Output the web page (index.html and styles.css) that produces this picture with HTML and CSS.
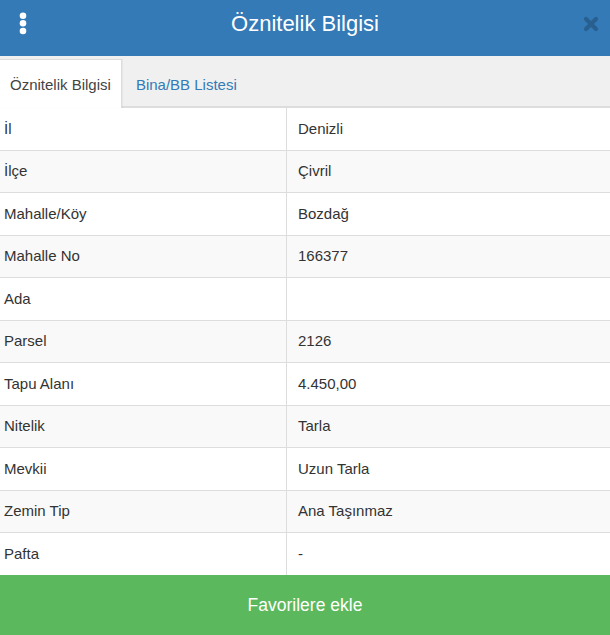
FILE: index.html
```html
<!DOCTYPE html>
<html lang="tr">
<head>
<meta charset="utf-8">
<title>Öznitelik Bilgisi</title>
<link rel="stylesheet" href="styles.css">
</head>
<body>
<div class="panel">
  <header class="header">
    <div class="header-left">
      <svg class="kebab" width="12" height="24" viewBox="0 0 12 24">
        <circle cx="6" cy="3.7" r="3.3" fill="#fff"/>
        <circle cx="6" cy="11.3" r="3.3" fill="#fff"/>
        <circle cx="6" cy="19" r="3.3" fill="#fff"/>
      </svg>
    </div>
    <h1 class="title">Öznitelik Bilgisi</h1>
    <div class="header-right">
      <svg class="close" width="16" height="16" viewBox="0 0 16 16">
        <path d="M3 3 L13 13 M13 3 L3 13" stroke="#285f8f" stroke-width="4.2" stroke-linecap="round" fill="none"/>
      </svg>
    </div>
  </header>
  <nav class="tabs">
    <div class="tab active">Öznitelik Bilgisi</div>
    <div class="tab">Bina/BB Listesi</div>
  </nav>
  <table class="attrs">
    <tbody>
      <tr><td class="k">İl</td><td class="v">Denizli</td></tr>
      <tr><td class="k">İlçe</td><td class="v">Çivril</td></tr>
      <tr><td class="k">Mahalle/Köy</td><td class="v">Bozdağ</td></tr>
      <tr><td class="k">Mahalle No</td><td class="v">166377</td></tr>
      <tr><td class="k">Ada</td><td class="v"></td></tr>
      <tr><td class="k">Parsel</td><td class="v">2126</td></tr>
      <tr><td class="k">Tapu Alanı</td><td class="v">4.450,00</td></tr>
      <tr><td class="k">Nitelik</td><td class="v">Tarla</td></tr>
      <tr><td class="k">Mevkii</td><td class="v">Uzun Tarla</td></tr>
      <tr><td class="k">Zemin Tip</td><td class="v">Ana Taşınmaz</td></tr>
      <tr><td class="k">Pafta</td><td class="v">-</td></tr>
    </tbody>
  </table>
  <div class="spacer"></div>
  <button class="fav">Favorilere ekle</button>
</div>
</body>
</html>
```

FILE: styles.css
```css
html, body {
  margin: 0;
  padding: 0;
  background: #fff;
}
body {
  font-family: "Liberation Sans", Arial, sans-serif;
  color: #333;
  font-size: 15px;
}
.panel {
  width: 610px;
  height: 635px;
  display: flex;
  flex-direction: column;
  overflow: hidden;
}
.header {
  height: 56px;
  flex: none;
  background: #337ab7;
  display: grid;
  grid-template-columns: 1fr auto 1fr;
  align-items: start;
}
.header-left {
  display: flex;
  padding-left: 17px;
  padding-top: 12px;
}
.header-right {
  display: flex;
  justify-content: flex-end;
  padding-right: 11px;
  padding-top: 16px;
}
.title {
  margin: 0;
  padding-top: 13px;
  font-weight: normal;
  font-size: 22px;
  color: #fff;
  line-height: 22px;
}
.tabs {
  flex: none;
  background: #f0f0f0;
  padding-top: 3px;
  border-bottom: 2px solid #ddd;
  display: flex;
  align-items: flex-end;
}
.tab {
  height: 48px;
  margin-bottom: -2px;
  padding: 0 10px;
  border: 1px solid transparent;
  border-bottom: none;
  display: flex;
  align-items: center;
  color: #337ab7;
  font-size: 15px;
}
.tab.active {
  background: #fff;
  border-color: #ddd;
  color: #444;
  margin-left: -1px;
  margin-right: 3px;
  box-shadow: 1px 0 1px rgba(0,0,0,0.04);
}
.attrs {
  width: 610px;
  border-collapse: collapse;
  table-layout: fixed;
  flex: none;
}
.attrs td {
  height: 41.5px;
  padding: 0;
  border-bottom: 1px solid #ddd;
  vertical-align: middle;
  line-height: 20px;
}
.attrs tr:nth-child(even) td {
  background: #f9f9f9;
}
.attrs td.k {
  width: 282px;
  padding-left: 4px;
  border-right: 1px solid #ddd;
}
.attrs td.v {
  padding-left: 11px;
}
.attrs tr:last-child td {
  border-bottom: none;
}
.spacer {
  flex: 1;
}
.fav {
  flex: none;
  height: 60px;
  width: 610px;
  border: none;
  margin: 0;
  background: #5cb85c;
  color: #fff;
  font-family: "Liberation Sans", Arial, sans-serif;
  font-size: 17.5px;
  padding: 0;
}
```
